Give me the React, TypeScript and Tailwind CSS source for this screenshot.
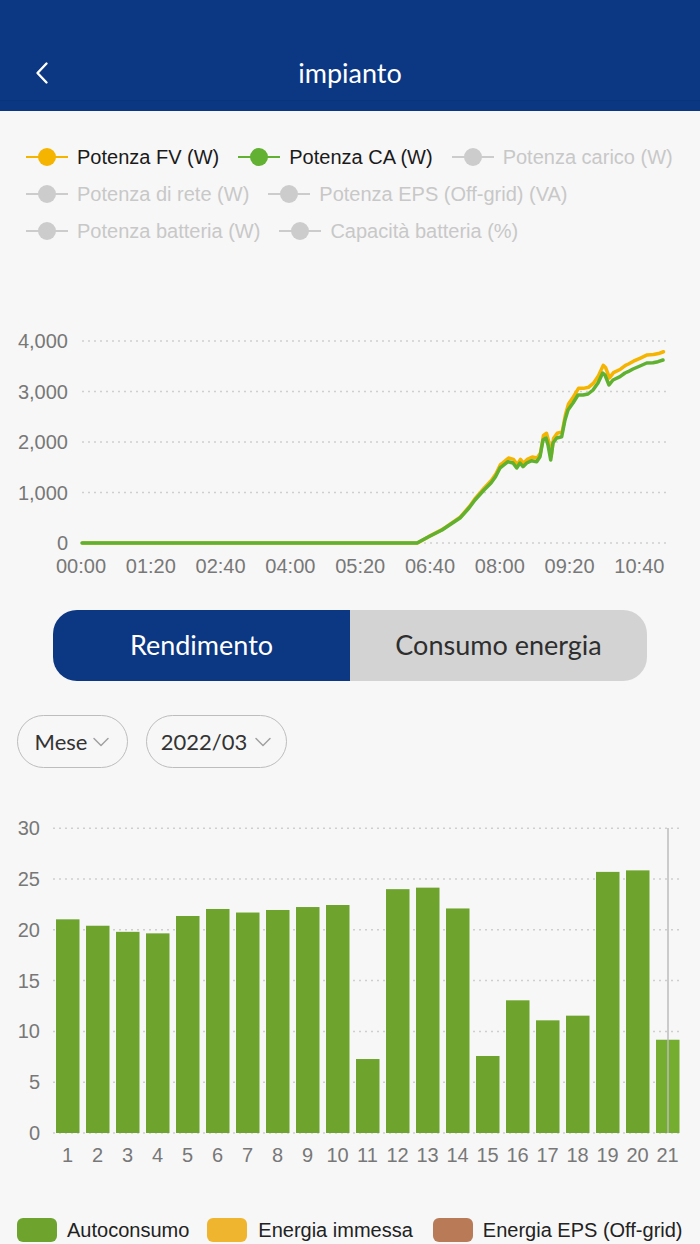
import React from "react";

const GREEN_PTS: [number, number][] = [
  [82, 543], [417, 543], [428.6, 536.7], [442, 530], [451, 524], [460, 518], [469, 508], [475, 500],
  [484, 490], [491, 483], [495.5, 476.7], [500, 468], [501.7, 466.7], [508, 461.7], [513, 463],
  [516.7, 468], [520, 463], [523, 466.7], [526.7, 463], [531.7, 460.7], [536.7, 461.7], [540, 456.7],
  [543, 440], [546, 438], [548, 445], [550.7, 460], [553, 443], [556.7, 438], [561.7, 436.7],
  [565, 420], [568, 410], [573, 403], [578, 395], [583, 395], [588, 394], [593, 390], [598, 383],
  [602.7, 373], [605, 375], [609, 385], [613, 380], [620, 376.7], [625, 373], [628, 371.7],
  [633, 369], [640, 366], [646.7, 363], [653, 362.7], [658, 361.7], [663, 360],
];

const YELLOW_PTS: [number, number][] = GREEN_PTS.map(([x, y]) => [x + 0.5, 543 - (543 - y) * 1.045]);

const toPts = (p: [number, number][]) => p.map(([x, y]) => `${x},${y}`).join(" ");

const BARS = [21.03, 20.4, 19.8, 19.65, 21.36, 22.05, 21.7, 21.95, 22.24, 22.44, 7.28, 24.0, 24.15, 22.1, 7.58, 13.06, 11.09, 11.55, 25.7, 25.85, 9.18];

const legendRows = [
  [
    { label: "Potenza FV (W)", color: "#f5b400", active: true },
    { label: "Potenza CA (W)", color: "#62b133", active: true },
    { label: "Potenza carico (W)", color: "#cccccc", active: false },
  ],
  [
    { label: "Potenza di rete (W)", color: "#cccccc", active: false },
    { label: "Potenza EPS (Off-grid) (VA)", color: "#cccccc", active: false },
  ],
  [
    { label: "Potenza batteria (W)", color: "#cccccc", active: false },
    { label: "Capacità batteria (%)", color: "#cccccc", active: false },
  ],
];

function LegendIcon({ color }: { color: string }) {
  return (
    <svg width="42" height="20" viewBox="0 0 42 20" className="shrink-0">
      <line x1="0" y1="10" x2="42" y2="10" stroke={color} strokeWidth="2" />
      <circle cx="21" cy="10" r="9" fill={color} />
    </svg>
  );
}

function Chevron() {
  return (
    <svg width="18" height="12" viewBox="0 0 18 12" className="shrink-0">
      <polyline points="2,2.5 9,9.5 16,2.5" fill="none" stroke="#a0a0a0" strokeWidth="1.5" strokeLinecap="round" strokeLinejoin="round" />
    </svg>
  );
}

export default function App() {
  const sans = { fontFamily: '"Liberation Sans", Arial, sans-serif' };
  const lato = { fontFamily: 'Lato, "Noto Sans", sans-serif' };
  const lineGrid = [
    { y: 341, label: "4,000" },
    { y: 391.5, label: "3,000" },
    { y: 442, label: "2,000" },
    { y: 492.5, label: "1,000" },
    { y: 543, label: "0" },
  ];
  const timeLabels = ["00:00", "01:20", "02:40", "04:00", "05:20", "06:40", "08:00", "09:20", "10:40"];
  const barGrid = [30, 25, 20, 15, 10, 5, 0];
  const barY = (v: number) => 1133 - v * 10.16;

  return (
    <div className="w-[700px] h-[1244px] bg-[#f7f7f7] overflow-hidden flex flex-col">
      {/* Header */}
      <div className="h-[111px] bg-[#0b3783] flex flex-col shrink-0">
        <div className="h-[100px] pt-[53px]">
          <div className="h-[40px] grid grid-cols-[1fr_auto_1fr] items-center">
            <div className="pl-[35px] flex items-center">
              <svg width="14" height="24" viewBox="0 0 14 24">
                <polyline points="11.5,2.5 2.5,12 11.5,21.5" fill="none" stroke="#ffffff" strokeWidth="2.4" strokeLinecap="round" strokeLinejoin="round" />
              </svg>
            </div>
            <div className="text-white text-[27px] leading-none pb-[2px]" style={lato}>
              impianto
            </div>
            <div />
          </div>
        </div>
        <div className="h-[11px] border-t border-[#09337a] bg-[#0a3682]" />
      </div>

      {/* Top legend */}
      <div className="pt-[27px] pl-[26px] flex flex-col" style={sans}>
        {legendRows.map((row, ri) => (
          <div key={ri} className="h-[37px] flex items-center gap-[19px]">
            {row.map((it) => (
              <div key={it.label} className="flex items-center gap-[9px]">
                <LegendIcon color={it.color} />
                <span className={`text-[20px] leading-none whitespace-nowrap ${it.active ? "text-[#1a1a1a]" : "text-[#c8c8c8]"}`}>
                  {it.label}
                </span>
              </div>
            ))}
          </div>
        ))}
      </div>

      {/* Line chart */}
      <svg width="700" height="351" viewBox="0 249 700 351" className="shrink-0" style={sans}>
        {lineGrid.map((g) => (
          <g key={g.label}>
            <line x1="82" y1={g.y} x2="666" y2={g.y} stroke="#cfcfcf" strokeWidth="1.5" strokeDasharray="2 4" />
            <text x="68" y={g.y + 7} textAnchor="end" fontSize="20" fill="#787878">
              {g.label}
            </text>
          </g>
        ))}
        {timeLabels.map((t, i) => (
          <text key={t} x={81 + 69.8 * i} y="573" textAnchor="middle" fontSize="20" fill="#787878">
            {t}
          </text>
        ))}
        <polyline points={toPts(YELLOW_PTS)} fill="none" stroke="#f5b400" strokeWidth="3.5" strokeLinejoin="round" strokeLinecap="round" />
        <polyline points={toPts(GREEN_PTS)} fill="none" stroke="#5fb12f" strokeWidth="3.5" strokeLinejoin="round" strokeLinecap="round" />
      </svg>

      {/* Toggle */}
      <div className="mt-[10px] ml-[53px] w-[594px] h-[71px] rounded-[24px] overflow-hidden flex shrink-0" style={lato}>
        <div className="w-[297px] bg-[#0b3783] flex items-center justify-center text-white text-[27px]">
          Rendimento
        </div>
        <div className="flex-1 bg-[#d3d3d3] flex items-center justify-center text-[#2e2e2e] text-[27px]">
          Consumo energia
        </div>
      </div>

      {/* Dropdowns */}
      <div className="mt-[34px] pl-[17px] flex gap-[18px] shrink-0" style={lato}>
        <div className="w-[111px] h-[53px] rounded-full border-[1.5px] border-[#bdbdbd] flex items-center justify-center gap-[5px] text-[22px] text-[#333333]">
          <span>Mese</span>
          <Chevron />
        </div>
        <div className="w-[141px] h-[53px] rounded-full border-[1.5px] border-[#bdbdbd] flex items-center justify-center gap-[7px] text-[22px] text-[#333333]">
          <span>2022/03</span>
          <Chevron />
        </div>
      </div>

      {/* Bar chart */}
      <svg width="700" height="412" viewBox="0 768 700 412" className="shrink-0" style={sans}>
        {barGrid.map((v) => (
          <g key={v}>
            <line x1="53" y1={barY(v)} x2="680" y2={barY(v)} stroke="#cfcfcf" strokeWidth="1.5" strokeDasharray="2 4" />
            <text x="40" y={barY(v) + 7} textAnchor="end" fontSize="20" fill="#787878">
              {v}
            </text>
          </g>
        ))}
        {BARS.map((v, i) => (
          <g key={i}>
            <rect x={56 + 30 * i} y={barY(v)} width="23.5" height={v * 10.16} fill={i === 20 ? "#74ad30" : "#6ea42d"} />
            <text x={67.5 + 30 * i} y="1162" textAnchor="middle" fontSize="20" fill="#787878">
              {i + 1}
            </text>
          </g>
        ))}
        <line x1="668" y1="828" x2="668" y2="1133" stroke="#bdbdbd" strokeWidth="1.5" />
      </svg>

      {/* Bottom legend */}
      <div className="mt-[38px] pl-[17px] flex items-center h-[24px] shrink-0" style={sans}>
        <div className="w-[40px] h-[24px] rounded-[6px] bg-[#6ea42d]" />
        <span className="ml-[10px] text-[20px] leading-none text-[#222222]">Autoconsumo</span>
        <div className="ml-[18px] w-[40px] h-[24px] rounded-[6px] bg-[#f0b52e]" />
        <span className="ml-[11px] text-[20px] leading-none text-[#222222]">Energia immessa</span>
        <div className="ml-[20px] w-[40px] h-[24px] rounded-[6px] bg-[#b97a57]" />
        <span className="ml-[10px] text-[20px] leading-none text-[#222222]">Energia EPS (Off-grid)</span>
      </div>
    </div>
  );
}
